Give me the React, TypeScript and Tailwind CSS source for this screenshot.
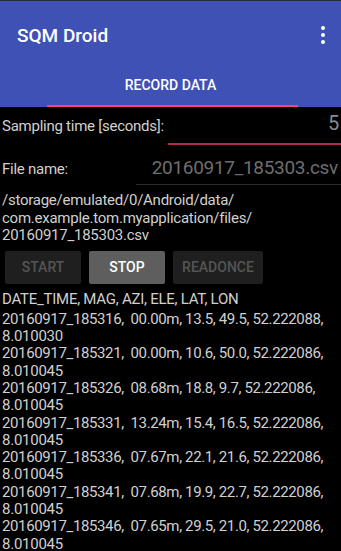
import React from "react";

const ROWS = [
  ["20160917_185316,  00.00m, 13.5, 49.5, 52.222088,", "8.010030"],
  ["20160917_185321,  00.00m, 10.6, 50.0, 52.222086,", "8.010045"],
  ["20160917_185326,  08.68m, 18.8, 9.7, 52.222086,", "8.010045"],
  ["20160917_185331,  13.24m, 15.4, 16.5, 52.222086,", "8.010045"],
  ["20160917_185336,  07.67m, 22.1, 21.6, 52.222086,", "8.010045"],
  ["20160917_185341,  07.68m, 19.9, 22.7, 52.222086,", "8.010045"],
  ["20160917_185346,  07.65m, 29.5, 21.0, 52.222086,", "8.010045"],
];

export default function App() {
  return (
    <div
      className="w-[341px] h-[551px] overflow-hidden bg-black flex flex-col"
      style={{ fontFamily: "Roboto, 'Liberation Sans', sans-serif" }}
    >
      {/* ── App bar + tab ── */}
      <div className="h-[107px] bg-[#3f51b5] border-t border-[#2a2a3a] flex flex-col shrink-0">
        <div className="h-[70px] flex items-center justify-between pl-[17px] pr-[16px]">
          <span className="text-white text-[19px] font-medium">SQM Droid</span>
          <div className="flex flex-col gap-[3px] items-center -mt-[3px]">
            <span className="w-[4px] h-[4px] rounded-full bg-white" />
            <span className="w-[4px] h-[4px] rounded-full bg-white" />
            <span className="w-[4px] h-[4px] rounded-full bg-white" />
          </div>
        </div>
        <div className="flex-1 flex flex-col">
          <div className="flex-1 flex items-center justify-center text-white text-[14px] font-medium pb-[5px]">
            RECORD DATA
          </div>
          <div className="h-[2px] ml-[47px] w-[251px] bg-[#ff4081]" />
        </div>
      </div>

      {/* ── Form ── */}
      <div className="flex flex-col text-[#d0d0d0] tracking-[-0.25px]">
        <div className="flex items-end h-[38px]">
          <span className="text-[15px] pl-[2px] pb-[8px]">Sampling time [seconds]:</span>
          <div className="flex-1 ml-[4px] h-full flex flex-col justify-end">
            <span className="text-[20px] text-[#8a8a8a] text-right pr-[2px] leading-none pb-[10px]">5</span>
            <div className="h-[2px] bg-[#b0285a]" />
          </div>
        </div>
        <div className="flex items-end h-[40px]">
          <span className="text-[15px] pl-[2px] pb-[5px]">File name:</span>
          <div className="flex-1 ml-[68px] h-full flex flex-col justify-end">
            <span className="text-[19px] tracking-[-0.3px] text-[#6e6e6e] text-right pr-[3px] leading-none pb-[7px] whitespace-nowrap -ml-[100px]">
              20160917_185303.csv
            </span>
            <div className="h-[1px] bg-[#2a2a2a]" />
          </div>
        </div>
        <div className="text-[15px] leading-[17.5px] pl-[2px] pt-[7px]">
          /storage/emulated/0/Android/data/
          <br />
          com.example.tom.myapplication/files/
          <br />
          20160917_185303.csv
        </div>

        {/* Buttons */}
        <div className="flex gap-[8px] pl-[5px] pt-[6px] tracking-normal">
          <div className="w-[76px] h-[33px] rounded-[2px] bg-[#1f1f1f] text-[#555] text-[14px] font-medium flex items-center justify-center">
            START
          </div>
          <div className="w-[76px] h-[33px] rounded-[2px] bg-[#5e5e5e] text-white text-[14px] font-medium flex items-center justify-center">
            STOP
          </div>
          <div className="w-[90px] h-[33px] rounded-[2px] bg-[#1f1f1f] text-[#555] text-[14px] font-medium flex items-center justify-center">
            READONCE
          </div>
        </div>

        {/* Data */}
        <div className="pl-[2px] pt-[7px] text-[15px] leading-[17.3px]">
          <div className="mb-[3px]">DATE_TIME, MAG, AZI, ELE, LAT, LON</div>
          {ROWS.map(([a, b]) => (
            <div key={a}>
              <div className="whitespace-pre tracking-[-0.37px]">{a}</div>
              <div>{b}</div>
            </div>
          ))}
        </div>
      </div>
    </div>
  );
}
